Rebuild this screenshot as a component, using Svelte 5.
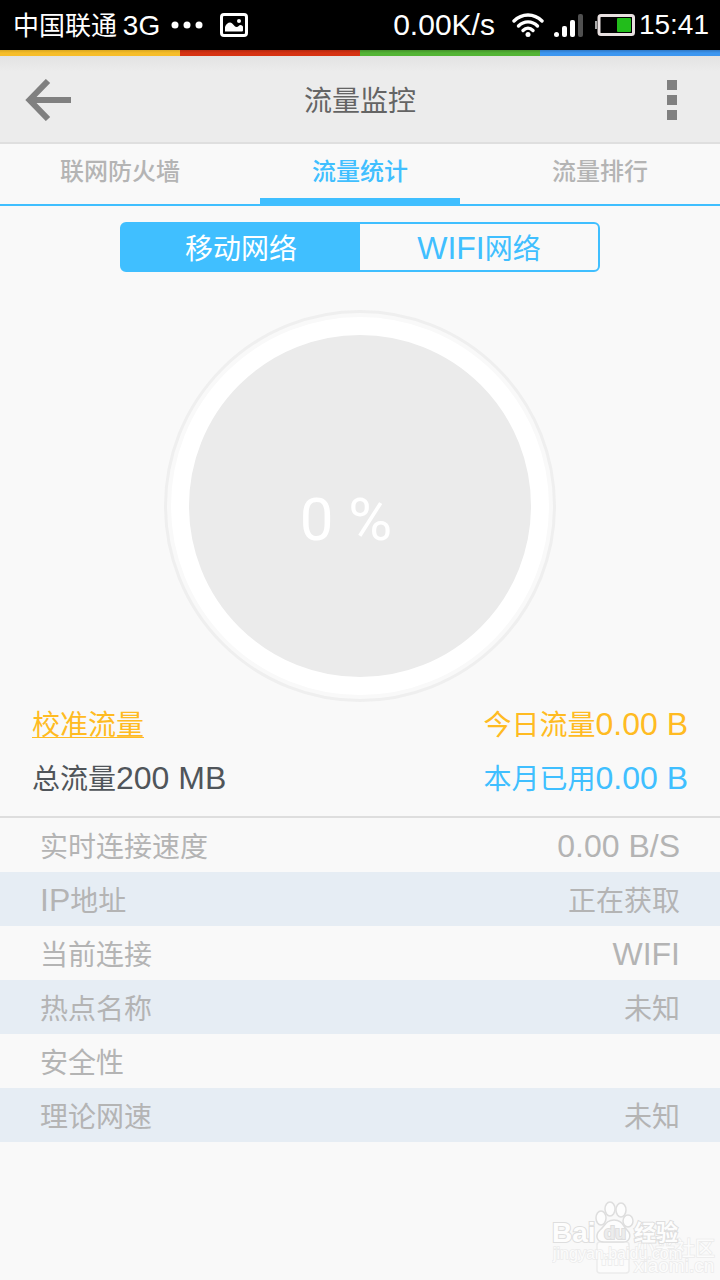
<script lang="ts">
	const stripes = ['yellow', 'red', 'green', 'blue'];
	const tabs = ['联网防火墙', '流量统计', '流量排行'];
	const networks = ['移动网络', 'WIFI网络'];
	const details = [
		{ label: '实时连接速度', value: '0.00 B/S' },
		{ label: 'IP地址', value: '正在获取' },
		{ label: '当前连接', value: 'WIFI' },
		{ label: '热点名称', value: '未知' },
		{ label: '安全性', value: '' },
		{ label: '理论网速', value: '未知' }
	];

	let activeTab = $state(1);
	let activeNetwork = $state(0);
	let percent = $state(0);

	// latin runs are set larger than the chinese text around them
	function splitRuns(text: string) {
		return text.match(/[\x20-\x7e]+|[^\x20-\x7e]+/g) ?? [];
	}

	function isLatin(run: string) {
		return /^[\x20-\x7e]/.test(run);
	}
</script>

{#snippet mixed(text: string)}
	{#each splitRuns(text) as run}<span class:latin={isLatin(run)}>{run}</span>{/each}
{/snippet}

<div class="screen">
	<div class="status-bar">
		<div class="status-group">
			<span class="carrier">中国联通 <span class="carrier-type">3G</span></span>
			<svg class="dots" width="32" height="8" viewBox="0 0 32 8" aria-hidden="true">
				<circle cx="4" cy="4" r="3.5" />
				<circle cx="16" cy="4" r="3.5" />
				<circle cx="28" cy="4" r="3.5" />
			</svg>
			<svg class="picture" width="28" height="24" viewBox="0 0 28 24" aria-hidden="true">
				<rect x="1.5" y="1.5" width="25" height="21" rx="2.5" fill="none" stroke="#fff" stroke-width="3" />
				<path d="M5 18.5V14c1-3 3-4.500 5-4.500 3 0 4 4.500 6.500 4.500 2 0 2.500-2 4-2 1.500 0 2.500 1 2.500 2v3c0 1-.5 1.500-1.500 1.500z" fill="#fff" />
				<circle cx="19" cy="8" r="2" fill="#fff" />
			</svg>
		</div>
		<div class="status-group">
			<span class="speed">0.00K/s</span>
			<svg width="32" height="24" viewBox="0 0 32 24" aria-hidden="true">
				<g fill="none" stroke="#fff" stroke-width="3.4" stroke-linecap="round">
					<path d="M2 8C10 0 22 0 30 8" />
					<path d="M6.5 13C12 7.5 20 7.5 25.5 13" />
					<path d="M11 17.5C14 14.5 18 14.5 21 17.5" />
				</g>
				<circle cx="16" cy="21.5" r="2.5" fill="#fff" />
			</svg>
			<svg class="signal" width="29" height="24" viewBox="0 0 29 24" aria-hidden="true">
				<rect x="0" y="19" width="5" height="5" rx="2.5" fill="#fff" />
				<rect x="8" y="13" width="5" height="11" rx="2" fill="#fff" />
				<rect x="16" y="7" width="5" height="17" rx="2" fill="#fff" />
				<rect x="24" y="1" width="5" height="23" rx="2" fill="#505050" />
			</svg>
			<svg width="40" height="22" viewBox="0 0 40 22" aria-hidden="true">
				<rect x="0" y="7" width="2" height="8" fill="#aaa" />
				<rect x="4" y="1.5" width="34.5" height="19" rx="2" fill="#000" stroke="#e8e0e0" stroke-width="3" />
				<rect x="22" y="4" width="14" height="14" rx="1" fill="#22bd1b" />
			</svg>
			<span class="clock">15:41</span>
		</div>
	</div>

	<div class="stripes">
		{#each stripes as stripe}
			<span class={stripe}></span>
		{/each}
	</div>

	<header class="title-bar">
		<button type="button" class="icon-button" aria-label="返回">
			<svg width="46" height="42" viewBox="0 0 46 42" aria-hidden="true">
				<path d="M23 2 4.500 21 23 40M4.500 21H46" fill="none" stroke="#808080" stroke-width="6" />
			</svg>
		</button>
		<h1>流量监控</h1>
		<button type="button" class="icon-button" aria-label="更多">
			<svg width="10" height="40" viewBox="0 0 10 40" fill="#808080" aria-hidden="true">
				<rect width="10" height="10" />
				<rect y="15" width="10" height="10" />
				<rect y="30" width="10" height="10" />
			</svg>
		</button>
	</header>

	<nav class="tabs">
		{#each tabs as tab, i}
			<button type="button" class:active={activeTab === i} onclick={() => (activeTab = i)}>{tab}</button>
		{/each}
	</nav>

	<main>
		<div class="switcher">
			{#each networks as network, i}
				<button type="button" class:active={activeNetwork === i} onclick={() => (activeNetwork = i)}>
					{@render mixed(network)}
				</button>
			{/each}
		</div>

		<div class="gauge">
			<div class="gauge-ring">
				<span class="gauge-value">{percent} %</span>
			</div>
		</div>

		<div class="summary">
			<div class="summary-row">
				<a href="#calibrate" class="amber">校准流量</a>
				<span class="amber">{@render mixed('今日流量0.00 B')}</span>
			</div>
			<div class="summary-row">
				<span>{@render mixed('总流量200 MB')}</span>
				<span class="sky">{@render mixed('本月已用0.00 B')}</span>
			</div>
		</div>

		<table class="details">
			<tbody>
				{#each details as item}
					<tr>
						<th scope="row">{@render mixed(item.label)}</th>
						<td>{@render mixed(item.value)}</td>
					</tr>
				{/each}
			</tbody>
		</table>
	</main>

	<svg class="watermark" width="168" height="80" viewBox="0 0 168 80">
		<g fill="#fcfcfc" stroke="#ebebeb" stroke-width="1.5">
			<rect x="45" y="42" width="32" height="31" rx="3" />
			<text x="49" y="65" font-size="20" font-weight="700">mi</text>
			<text class="cn" x="83" y="56" font-size="20">小米社区</text>
			<text x="82" y="72" font-size="19">xiaomi.cn</text>
			<text x="1" y="59" font-size="16">jingyan.baidu.com</text>
		</g>
		<g fill="#fdfdfd" stroke="#dedede" stroke-width="2">
			<text x="0" y="42" font-size="28" font-weight="700">Bai</text>
			<g stroke-width="1.5">
				<ellipse cx="49" cy="18" rx="5" ry="7" />
				<ellipse cx="58" cy="9" rx="5" ry="7" />
				<ellipse cx="69" cy="10" rx="5" ry="7" />
				<ellipse cx="76" cy="21" rx="5" ry="6" />
				<path d="M62 20c8 0 9 6 13 10 5 5 3 12-4 12H52c-8 0-9-7-4-12 5-4 6-10 14-10z" />
			</g>
			<text x="52" y="39" font-size="18" font-weight="700" fill="#ececec">du</text>
			<text class="cn" x="82" y="40" font-size="22" font-weight="700">经验</text>
		</g>
	</svg>
</div>

<style>
	:global(body) {
		margin: 0;
		background: #f9f9f9;
	}

	.screen {
		position: relative;
		display: flex;
		flex-direction: column;
		min-height: 100vh;
		background: #f9f9f9;
		color: #50555a;
		font-family: 'Noto Sans CJK SC', sans-serif;
		font-size: 28px;
	}

	button {
		margin: 0;
		padding: 0;
		border: none;
		background: transparent;
		color: inherit;
		font: inherit;
		cursor: pointer;
	}

	.latin {
		font-family: 'Liberation Sans', Arial, sans-serif;
		font-size: 32px;
		line-height: 32px;
	}

	.status-bar {
		display: flex;
		align-items: center;
		justify-content: space-between;
		height: 50px;
		padding: 0 11px 0 13px;
		background: #000;
		color: #fff;
		white-space: nowrap;
	}

	.status-group {
		display: flex;
		align-items: center;
	}

	.carrier {
		font-size: 26px;
		line-height: 48px;
	}

	.carrier-type,
	.speed,
	.clock {
		font-family: 'Liberation Sans', Arial, sans-serif;
		font-size: 28px;
		line-height: 48px;
	}

	.speed {
		margin-right: 17px;
		font-size: 30px;
	}

	.dots {
		margin-left: 11px;
		fill: #fff;
	}

	.picture {
		margin-left: 17px;
	}

	.signal {
		margin: 0 12px 0 10px;
	}

	.clock {
		margin-left: 4px;
	}

	.stripes {
		display: grid;
		grid-template-columns: repeat(4, 1fr);
		height: 6px;
	}

	.yellow {
		background: linear-gradient(#d7a621, #f6bd29 50%);
	}

	.red {
		background: linear-gradient(#b3280e, #d63212 50%);
	}

	.green {
		background: linear-gradient(#43902a, #53b435 50%);
	}

	.blue {
		background: linear-gradient(#3078c4, #3c96f0 50%);
	}

	.title-bar {
		display: grid;
		grid-template-columns: 96px 1fr 96px;
		align-items: stretch;
		height: 86px;
		border-bottom: 2px solid #dfdfdf;
		background: linear-gradient(#e3e3e3, #ececec 16px);
	}

	.title-bar h1 {
		margin: 0;
		color: #646464;
		font-size: 28px;
		font-weight: 400;
		line-height: 86px;
		text-align: center;
	}

	.icon-button {
		display: flex;
		align-items: center;
		justify-content: center;
		padding-top: 2px;
	}

	.tabs {
		display: grid;
		grid-template-columns: repeat(3, 1fr);
		height: 60px;
		border-bottom: 2px solid #40bfff;
	}

	.tabs button {
		display: flex;
		flex-direction: column;
		align-items: center;
		justify-content: space-between;
		color: #b4b4b4;
		font-size: 24px;
		font-weight: 500;
		line-height: 52px;
	}

	.tabs button::after {
		content: '';
		width: 200px;
		max-width: 100%;
		height: 6px;
	}

	.tabs button.active {
		color: #40bfff;
	}

	.tabs button.active::after {
		background: #40bfff;
	}

	main {
		display: flex;
		flex-direction: column;
		padding-top: 16px;
	}

	.switcher {
		display: grid;
		grid-template-columns: 1fr 1fr;
		box-sizing: border-box;
		width: 66.667%;
		height: 50px;
		margin: 0 auto;
		border: 2px solid #40bfff;
		border-radius: 6px;
	}

	.switcher button {
		color: #40bfff;
		line-height: 44px;
	}

	.switcher button.active {
		background: #40bfff;
		color: #fff;
	}

	.gauge {
		align-self: center;
		margin-top: 38px;
		padding: 4px;
		border: 3px solid #efefef;
		border-radius: 50%;
	}

	.gauge-ring {
		display: flex;
		align-items: center;
		justify-content: center;
		width: 342px;
		height: 342px;
		border: 18px solid #fff;
		border-radius: 50%;
		background: #ebebeb;
	}

	.gauge-value {
		padding: 28px 28px 0 0;
		color: #fff;
		font-family: Roboto, sans-serif;
		font-size: 60px;
		line-height: 70px;
	}

	.summary {
		display: flex;
		flex-direction: column;
		gap: 10px;
		padding: 0 32px 16px;
		border-bottom: 2px solid #dedede;
	}

	.summary-row {
		display: flex;
		justify-content: space-between;
		height: 44px;
		line-height: 42px;
	}

	.amber {
		color: #ffbb22;
	}

	a.amber {
		text-decoration: underline;
		text-decoration-thickness: 1px;
		text-underline-offset: 2px;
	}

	.sky {
		color: #40bfff;
	}

	.details {
		width: 100%;
		border-collapse: collapse;
		color: #b4b4b4;
	}

	.details tr:nth-child(even) {
		background: #e6edf4;
	}

	.details th,
	.details td {
		height: 54px;
		padding: 0 40px;
		font-weight: 400;
		line-height: 52px;
		text-align: left;
	}

	.details td {
		text-align: right;
	}

	.watermark {
		position: absolute;
		right: 0;
		bottom: 0;
		font-family: 'Liberation Sans', Arial, sans-serif;
	}

	.watermark text {
		paint-order: stroke;
	}

	.watermark .cn {
		font-family: 'Noto Sans CJK SC', sans-serif;
	}
</style>
